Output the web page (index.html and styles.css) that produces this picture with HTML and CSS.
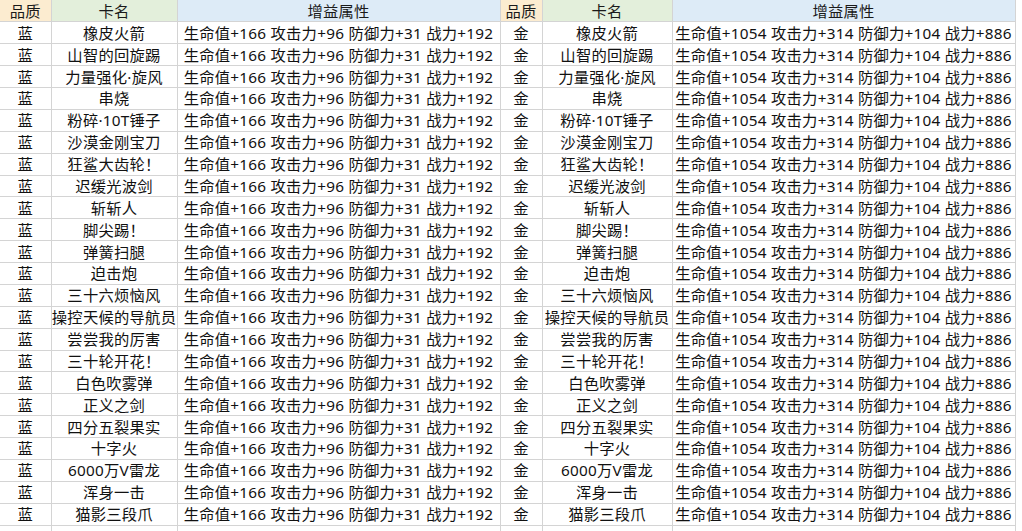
FILE: index.html
```html
<!DOCTYPE html>
<html lang="zh">
<head>
<meta charset="utf-8">
<title>卡牌属性</title>
<link rel="stylesheet" href="styles.css">
</head>
<body>
<table class="sheet">
  <colgroup>
    <col class="c-q"><col class="c-n"><col class="c-a">
    <col class="c-q2"><col class="c-n2"><col class="c-a2">
  </colgroup>
  <thead>
    <tr>
      <th class="h-q">品质</th><th class="h-n">卡名</th><th class="h-a">增益属性</th>
      <th class="h-q">品质</th><th class="h-n">卡名</th><th class="h-a">增益属性</th>
    </tr>
  </thead>
  <tbody>
    <tr><td>蓝</td><td>橡皮火箭</td><td>生命值+166 攻击力+96 防御力+31 战力+192</td><td>金</td><td>橡皮火箭</td><td>生命值+1054 攻击力+314 防御力+104 战力+886</td></tr>
    <tr><td>蓝</td><td>山智的回旋踢</td><td>生命值+166 攻击力+96 防御力+31 战力+192</td><td>金</td><td>山智的回旋踢</td><td>生命值+1054 攻击力+314 防御力+104 战力+886</td></tr>
    <tr><td>蓝</td><td>力量强化·旋风</td><td>生命值+166 攻击力+96 防御力+31 战力+192</td><td>金</td><td>力量强化·旋风</td><td>生命值+1054 攻击力+314 防御力+104 战力+886</td></tr>
    <tr><td>蓝</td><td>串烧</td><td>生命值+166 攻击力+96 防御力+31 战力+192</td><td>金</td><td>串烧</td><td>生命值+1054 攻击力+314 防御力+104 战力+886</td></tr>
    <tr><td>蓝</td><td>粉碎·10T锤子</td><td>生命值+166 攻击力+96 防御力+31 战力+192</td><td>金</td><td>粉碎·10T锤子</td><td>生命值+1054 攻击力+314 防御力+104 战力+886</td></tr>
    <tr><td>蓝</td><td>沙漠金刚宝刀</td><td>生命值+166 攻击力+96 防御力+31 战力+192</td><td>金</td><td>沙漠金刚宝刀</td><td>生命值+1054 攻击力+314 防御力+104 战力+886</td></tr>
    <tr><td>蓝</td><td>狂鲨大齿轮！</td><td>生命值+166 攻击力+96 防御力+31 战力+192</td><td>金</td><td>狂鲨大齿轮！</td><td>生命值+1054 攻击力+314 防御力+104 战力+886</td></tr>
    <tr><td>蓝</td><td>迟缓光波剑</td><td>生命值+166 攻击力+96 防御力+31 战力+192</td><td>金</td><td>迟缓光波剑</td><td>生命值+1054 攻击力+314 防御力+104 战力+886</td></tr>
    <tr><td>蓝</td><td>斩斩人</td><td>生命值+166 攻击力+96 防御力+31 战力+192</td><td>金</td><td>斩斩人</td><td>生命值+1054 攻击力+314 防御力+104 战力+886</td></tr>
    <tr><td>蓝</td><td>脚尖踢！</td><td>生命值+166 攻击力+96 防御力+31 战力+192</td><td>金</td><td>脚尖踢！</td><td>生命值+1054 攻击力+314 防御力+104 战力+886</td></tr>
    <tr><td>蓝</td><td>弹簧扫腿</td><td>生命值+166 攻击力+96 防御力+31 战力+192</td><td>金</td><td>弹簧扫腿</td><td>生命值+1054 攻击力+314 防御力+104 战力+886</td></tr>
    <tr><td>蓝</td><td>迫击炮</td><td>生命值+166 攻击力+96 防御力+31 战力+192</td><td>金</td><td>迫击炮</td><td>生命值+1054 攻击力+314 防御力+104 战力+886</td></tr>
    <tr><td>蓝</td><td>三十六烦恼风</td><td>生命值+166 攻击力+96 防御力+31 战力+192</td><td>金</td><td>三十六烦恼风</td><td>生命值+1054 攻击力+314 防御力+104 战力+886</td></tr>
    <tr><td>蓝</td><td>操控天候的导航员</td><td>生命值+166 攻击力+96 防御力+31 战力+192</td><td>金</td><td>操控天候的导航员</td><td>生命值+1054 攻击力+314 防御力+104 战力+886</td></tr>
    <tr><td>蓝</td><td>尝尝我的厉害</td><td>生命值+166 攻击力+96 防御力+31 战力+192</td><td>金</td><td>尝尝我的厉害</td><td>生命值+1054 攻击力+314 防御力+104 战力+886</td></tr>
    <tr><td>蓝</td><td>三十轮开花！</td><td>生命值+166 攻击力+96 防御力+31 战力+192</td><td>金</td><td>三十轮开花！</td><td>生命值+1054 攻击力+314 防御力+104 战力+886</td></tr>
    <tr><td>蓝</td><td>白色吹雾弹</td><td>生命值+166 攻击力+96 防御力+31 战力+192</td><td>金</td><td>白色吹雾弹</td><td>生命值+1054 攻击力+314 防御力+104 战力+886</td></tr>
    <tr><td>蓝</td><td>正义之剑</td><td>生命值+166 攻击力+96 防御力+31 战力+192</td><td>金</td><td>正义之剑</td><td>生命值+1054 攻击力+314 防御力+104 战力+886</td></tr>
    <tr><td>蓝</td><td>四分五裂果实</td><td>生命值+166 攻击力+96 防御力+31 战力+192</td><td>金</td><td>四分五裂果实</td><td>生命值+1054 攻击力+314 防御力+104 战力+886</td></tr>
    <tr><td>蓝</td><td>十字火</td><td>生命值+166 攻击力+96 防御力+31 战力+192</td><td>金</td><td>十字火</td><td>生命值+1054 攻击力+314 防御力+104 战力+886</td></tr>
    <tr><td>蓝</td><td>6000万V雷龙</td><td>生命值+166 攻击力+96 防御力+31 战力+192</td><td>金</td><td>6000万V雷龙</td><td>生命值+1054 攻击力+314 防御力+104 战力+886</td></tr>
    <tr><td>蓝</td><td>浑身一击</td><td>生命值+166 攻击力+96 防御力+31 战力+192</td><td>金</td><td>浑身一击</td><td>生命值+1054 攻击力+314 防御力+104 战力+886</td></tr>
    <tr><td>蓝</td><td>猫影三段爪</td><td>生命值+166 攻击力+96 防御力+31 战力+192</td><td>金</td><td>猫影三段爪</td><td>生命值+1054 攻击力+314 防御力+104 战力+886</td></tr>
    <tr class="blank"><td></td><td></td><td></td><td></td><td></td><td></td></tr>
  </tbody>
</table>
</body>
</html>
```

FILE: styles.css
```css
html, body {
  margin: 0;
  padding: 0;
  background: #ffffff;
  overflow: hidden;
}

.sheet {
  border-collapse: collapse;
  table-layout: fixed;
  width: 1015px;
  font-family: "Noto Sans", "Noto Sans CJK SC", sans-serif;
  font-size: 15.3px;
  letter-spacing: 0.25px;
  color: #111111;
}

.c-q { width: 51px; }
.c-n { width: 126px; }
.c-a { width: 323px; }
.c-q2 { width: 42px; }
.c-n2 { width: 130px; }
.c-a2 { width: 343px; }

.sheet th,
.sheet td {
  border: 1px solid #d4d4d4;
  padding: 0;
  text-align: center;
  white-space: nowrap;
  overflow: hidden;
  line-height: 20px;
}

.sheet tr {
  height: 21.875px;
}

.sheet thead th {
  font-weight: normal;
  color: #1a1a1a;
  border-top: none;
}

.sheet th:first-child,
.sheet td:first-child {
  border-left: none;
}

.h-q { background: #fcecd0; }
.h-n { background: #e3efdb; }
.h-a { background: #ddebf7; }

.sheet .blank td {
  height: 21.875px;
}
```
